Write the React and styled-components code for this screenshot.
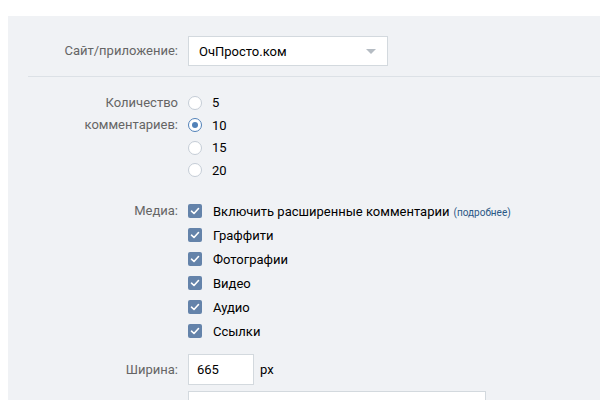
import React from "react";
import styled, { createGlobalStyle } from "styled-components";

const Global = createGlobalStyle`
  html, body { margin: 0; padding: 0; background: #fff; overflow: hidden; }
  body { font-family: Roboto, "Open Sans", Arial, sans-serif; font-size: 13px; color: #000; }
`;

const Panel = styled.div`
  margin: 16px 0 0 8px;
  background: #f0f2f5;
  padding-top: 20px;
  height: 384px;
  overflow: hidden;
  box-sizing: border-box;
`;

const Row = styled.div`
  display: grid;
  grid-template-columns: 170px 1fr;
  column-gap: 10px;
  align-items: ${(p) => (p.$top ? "start" : "center")};
  margin-top: ${(p) => p.$mt || 0}px;
`;

const Label = styled.div`
  text-align: right;
  color: #656565;
  line-height: ${(p) => p.$lh || 16}px;
`;

const Divider = styled.div`
  height: 1px;
  background: #dce1e6;
  margin: 10px 0 0 20px;
`;

const Select = styled.div`
  width: 200px;
  height: 30px;
  box-sizing: border-box;
  border: 1px solid #d3d9de;
  background: #fff;
  display: flex;
  align-items: center;
  justify-content: space-between;
  padding: 0 11px 0 10px;
`;

const Arrow = styled.span`
  width: 0;
  height: 0;
  border-left: 5px solid transparent;
  border-right: 5px solid transparent;
  border-top: 5px solid #b5bcc3;
`;

const Stack = styled.div`
  display: flex;
  flex-direction: column;
`;

const Option = styled.label`
  display: flex;
  align-items: center;
  gap: 10px;
  height: ${(p) => p.$h}px;
`;

const Radio = styled.span`
  width: 14px;
  height: 14px;
  box-sizing: border-box;
  border-radius: 50%;
  border: 1px solid ${(p) => (p.$on ? "#5181b8" : "#c5cdd6")};
  background: #fff;
  display: flex;
  align-items: center;
  justify-content: center;
  &::after {
    content: "";
    width: 6px;
    height: 6px;
    border-radius: 50%;
    background: #5181b8;
    display: ${(p) => (p.$on ? "block" : "none")};
  }
`;

const Check = styled.span`
  width: 14px;
  height: 14px;
  border-radius: 2px;
  background: #6483aa;
  display: flex;
  align-items: center;
  justify-content: center;
  margin-right: 1px;
`;

const More = styled.a`
  font-size: 10px;
  color: #2a5885;
  margin-left: 4px;
`;

const Input = styled.div`
  width: ${(p) => p.$w}px;
  height: ${(p) => p.$h}px;
  box-sizing: border-box;
  border: 1px solid #d3d9de;
  background: #fff;
  padding: 0 8px;
  display: flex;
  align-items: center;
`;

const Inline = styled.div`
  display: flex;
  align-items: center;
  gap: 6px;
`;

const Tick = () => (
  <svg width="10" height="8" viewBox="0 0 10 8">
    <path d="M1.5 4.2 L4 6.5 L8.5 1.5" fill="none" stroke="#fff" strokeWidth="1.6" strokeLinecap="round" strokeLinejoin="round" />
  </svg>
);

const counts = ["5", "10", "15", "20"];
const media = [
  "Включить расширенные комментарии",
  "Граффити",
  "Фотографии",
  "Видео",
  "Аудио",
  "Ссылки",
];

export default function App() {
  return (
    <>
      <Global />
      <Panel>
        <Row>
          <Label>Сайт/приложение:</Label>
          <Select>
            <span>ОчПросто.ком</span>
            <Arrow />
          </Select>
        </Row>
        <Divider />
        <Row $top $mt={14.5}>
          <Label $lh={22.5}>Количество<br />комментариев:</Label>
          <Stack>
            {counts.map((c) => (
              <Option key={c} $h={22.5}>
                <Radio $on={c === "10"} />
                <span>{c}</span>
              </Option>
            ))}
          </Stack>
        </Row>
        <Row $top $mt={17.75}>
          <Label $lh={24}>Медиа:</Label>
          <Stack>
            {media.map((m, i) => (
              <Option key={m} $h={24}>
                <Check><Tick /></Check>
                <span>
                  {m}
                  {i === 0 && <More>(подробнее)</More>}
                </span>
              </Option>
            ))}
          </Stack>
        </Row>
        <Row $mt={11}>
          <Label>Ширина:</Label>
          <Inline>
            <Input $w={66} $h={31}>665</Input>
            <span>px</span>
          </Inline>
        </Row>
        <Row $mt={6}>
          <div />
          <Input $w={298} $h={40} />
        </Row>
      </Panel>
    </>
  );
}
